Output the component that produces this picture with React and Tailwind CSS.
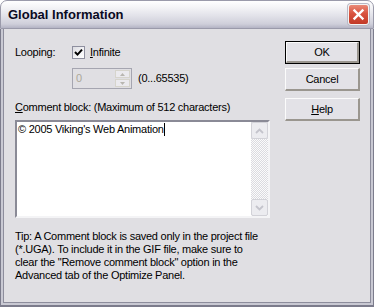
function CloseButton() {
  return (
    <div className="w-[21px] h-[21px] rounded-[3px] border border-[#f4f4f4] bg-[linear-gradient(to_bottom,#e98a78_0%,#d9533f_45%,#c23a28_100%)] flex items-center justify-center shadow-[0_0_0_1px_#b8b8c4]">
      <svg width="13" height="13" viewBox="0 0 13 13">
        <path d="M2.5 2.5 L10.5 10.5 M10.5 2.5 L2.5 10.5" stroke="#ffffff" strokeWidth="2.4" strokeLinecap="square" />
      </svg>
    </div>
  )
}

function Checkbox() {
  return (
    <div className="w-[13px] h-[13px] border border-[#8e8f9f] bg-[linear-gradient(135deg,#dcdce2_0%,#f4f4f6_60%,#ffffff_100%)] flex items-center justify-center">
      <svg width="9" height="9" viewBox="0 0 9 9">
        <path d="M1 4 L3.5 6.6 L8 1.6" stroke="#000000" strokeWidth="2" fill="none" />
      </svg>
    </div>
  )
}

function Spinner() {
  return (
    <div className="w-[60px] h-[21px] border border-[#a5a5b0] bg-[#e0dfe3] flex items-stretch">
      <div className="flex-1 pl-[3px] pt-[3px] text-[#aca899]">0</div>
      <div className="w-[16px] flex flex-col gap-[1px] py-[1px] pr-[1px]">
        <div className="flex-1 border border-[#d6d4cc] bg-[#ebeaee] flex items-center justify-center">
          <svg width="5" height="3" viewBox="0 0 5 3"><path d="M0 3 L2.5 0 L5 3 Z" fill="#b8b6b0" /></svg>
        </div>
        <div className="flex-1 border border-[#d6d4cc] bg-[#ebeaee] flex items-center justify-center">
          <svg width="5" height="3" viewBox="0 0 5 3"><path d="M0 0 L2.5 3 L5 0 Z" fill="#b8b6b0" /></svg>
        </div>
      </div>
    </div>
  )
}

function ScrollArrow({ down }) {
  return (
    <div className="h-[17px] border border-[#d2d2d8] bg-[#ececf0] rounded-[2px] flex items-center justify-center">
      <svg width="9" height="6" viewBox="0 0 9 6">
        <path d={down ? 'M1 1 L4.5 4.5 L8 1' : 'M1 5 L4.5 1.5 L8 5'} stroke="#c4c4cc" strokeWidth="1.8" fill="none" />
      </svg>
    </div>
  )
}

function Boton({ children, porDefecto }) {
  return (
    <div className={porDefecto ? 'h-[23px] border border-black' : 'h-[23px]'}>
      <div className="h-full border-t border-l border-[#fbfbfb] border-r-2 border-b-2 border-r-[#9a968f] border-b-[#9a968f] bg-[#e3e2e7] flex items-center justify-center">
        {children}
      </div>
    </div>
  )
}

export default function App() {
  return (
    <div className="w-[374px] h-[307px] flex flex-col bg-white text-[11px] leading-[13px] text-black font-['Liberation_Sans',Arial,sans-serif]">
      <div className="h-[29px] shrink-0 rounded-t-[7px] border border-[#9a9aaa] bg-[linear-gradient(to_bottom,#ffffff_0%,#f3f3f6_25%,#e2e2e9_55%,#cfcfda_85%,#b4b4c4_100%)] flex items-center justify-between pl-[7px] pr-[4px]">
        <span className="font-bold text-[13px] text-[#0a0a22]">Global Information</span>
        <CloseButton />
      </div>
      <div className="flex-1 border-l border-r border-b-2 border-[#7c7c8c]">
        <div className="h-full border-l-2 border-r-2 border-b-2 border-[#c9c9d3]">
          <div className="h-full border-l border-r border-b border-[#8d8d9c] bg-[#e0dfe3] flex tracking-[-0.25px]">
            <div className="w-[255px] ml-[11px] flex flex-col">
              <div className="mt-[17px] h-[13px] flex items-center">
                <span className="w-[57px]">Looping:</span>
                <Checkbox />
                <span className="ml-[5px]"><span className="underline">I</span>nfinite</span>
              </div>
              <div className="mt-[9px] flex items-center pl-[57px]">
                <Spinner />
                <span className="ml-[6px]">(0...65535)</span>
              </div>
              <div className="mt-[12px]"><span className="underline">C</span>omment block: (Maximum of 512 characters)</div>
              <div className="mt-[6px] h-[98px] border-2 border-t-[#8a8a96] border-l-[#8a8a96] border-r-[#f4f4f6] border-b-[#f4f4f6] bg-white flex">
                <div className="flex-1 pl-[1px] pt-[1px] flex items-start">
                  <span>© 2005 Viking's Web Animation</span>
                  <span className="w-[1px] h-[13px] bg-black"></span>
                </div>
                <div className="w-[17px] flex flex-col justify-between bg-[repeating-conic-gradient(#fbfbfb_0_25%,#dadae0_0_50%)] bg-[length:2px_2px]">
                  <ScrollArrow />
                  <ScrollArrow down />
                </div>
              </div>
              <p className="mt-[12px] pr-[2px]">
                Tip: A Comment block is saved only in the project file (*.UGA). To include it in the GIF file, make sure to clear the "Remove comment block" option in the Advanced tab of the Optimize Panel.
              </p>
            </div>
            <div className="w-[75px] ml-[15px] mt-[12px] flex flex-col">
              <Boton porDefecto>OK</Boton>
              <div className="mt-[4px]"><Boton>Cancel</Boton></div>
              <div className="mt-[7px]"><Boton><span><span className="underline">H</span>elp</span></Boton></div>
            </div>
          </div>
        </div>
      </div>
    </div>
  )
}
